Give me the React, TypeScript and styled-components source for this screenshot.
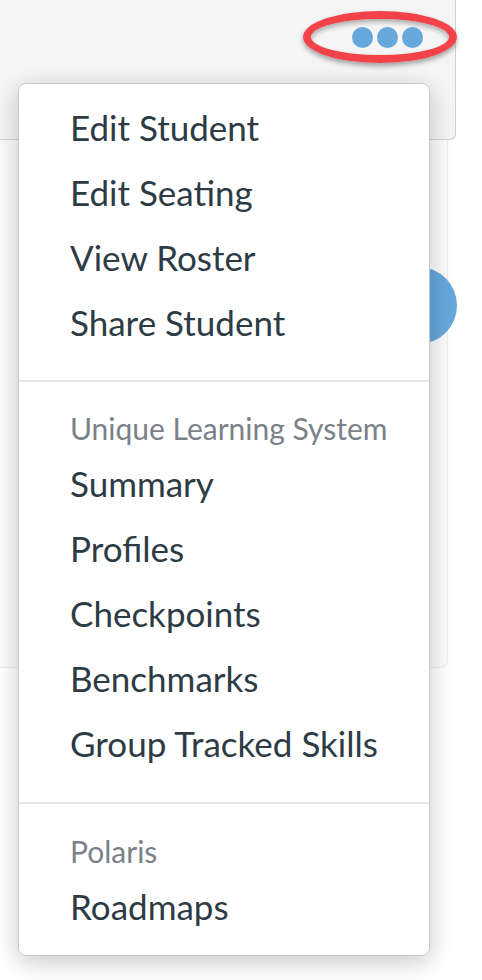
import React from "react";
import styled, { createGlobalStyle } from "styled-components";

const GlobalStyle = createGlobalStyle`
  html, body {
    margin: 0;
    padding: 0;
    background: #ffffff;
    font-family: Lato, "Liberation Sans", sans-serif;
  }
`;

const Page = styled.div`
  position: relative;
  width: 482px;
  height: 980px;
  overflow: hidden;
  background: #ffffff;
`;

const TopBar = styled.div`
  position: relative;
  width: 456px;
  height: 140px;
  background: #f5f5f5;
  border-right: 1px solid #d0d0d0;
  border-bottom: 1px solid #d0d0d0;
  border-bottom-right-radius: 6px;
  box-sizing: border-box;
`;

const MoreButton = styled.div`
  position: absolute;
  top: 27px;
  left: 352px;
  display: flex;
  gap: 4px;
`;

const Dot = styled.span`
  width: 21px;
  height: 21px;
  border-radius: 50%;
  background: #66a7dc;
`;

const Highlight = styled.div`
  position: absolute;
  top: 11px;
  left: 303px;
  width: 154px;
  height: 52px;
  border: 8px solid #f4424a;
  border-radius: 50%;
  box-sizing: border-box;
  box-shadow: 0 3px 5px rgba(0, 0, 0, 0.35), inset 0 3px 5px rgba(0, 0, 0, 0.3);
`;

const Card = styled.div`
  position: relative;
  width: 448px;
  height: 528px;
  background: #fbfbfb;
  border-right: 1px solid #ececec;
  border-bottom: 1px solid #ececec;
  border-bottom-right-radius: 8px;
  box-sizing: border-box;
`;

const Avatar = styled.div`
  position: absolute;
  top: 127px;
  left: 380px;
  width: 77px;
  height: 77px;
  border-radius: 50%;
  background: #66a7dc;
`;

const Menu = styled.div`
  position: absolute;
  top: 83px;
  left: 18px;
  width: 412px;
  height: 873px;
  box-sizing: border-box;
  background: #ffffff;
  border: 1px solid #c8c8c8;
  border-radius: 8px;
  box-shadow: 0 6px 24px rgba(0, 0, 0, 0.22);
  display: flex;
  flex-direction: column;
`;

const Section = styled.div<{ $top: number; $bottom: number }>`
  flex-shrink: 0;
  display: flex;
  flex-direction: column;
  padding: ${(p) => p.$top}px 0 ${(p) => p.$bottom}px;
`;

const Divider = styled.div`
  flex-shrink: 0;
  height: 2px;
  background: #e6e6e6;
`;

const Item = styled.div`
  flex-shrink: 0;
  height: 65px;
  display: flex;
  align-items: center;
  padding-left: 51px;
  font-size: 35px;
  color: #2d3b45;
  white-space: nowrap;
`;

const Heading = styled.div`
  flex-shrink: 0;
  height: 44px;
  display: flex;
  align-items: center;
  padding-left: 51px;
  font-size: 30px;
  color: #7a8189;
  white-space: nowrap;
`;

export default function App() {
  return (
    <>
      <GlobalStyle />
      <Page>
        <TopBar>
          <Highlight />
          <MoreButton>
            <Dot />
            <Dot />
            <Dot />
          </MoreButton>
        </TopBar>
        <Card>
          <Avatar />
        </Card>
        <Menu>
          <Section $top={10} $bottom={26}>
            <Item>Edit Student</Item>
            <Item>Edit Seating</Item>
            <Item>View Roster</Item>
            <Item>Share Student</Item>
          </Section>
          <Divider />
          <Section $top={24} $bottom={27}>
            <Heading>Unique Learning System</Heading>
            <Item>Summary</Item>
            <Item>Profiles</Item>
            <Item>Checkpoints</Item>
            <Item>Benchmarks</Item>
            <Item>Group Tracked Skills</Item>
          </Section>
          <Divider />
          <Section $top={25} $bottom={16}>
            <Heading>Polaris</Heading>
            <Item>Roadmaps</Item>
          </Section>
        </Menu>
      </Page>
    </>
  );
}
